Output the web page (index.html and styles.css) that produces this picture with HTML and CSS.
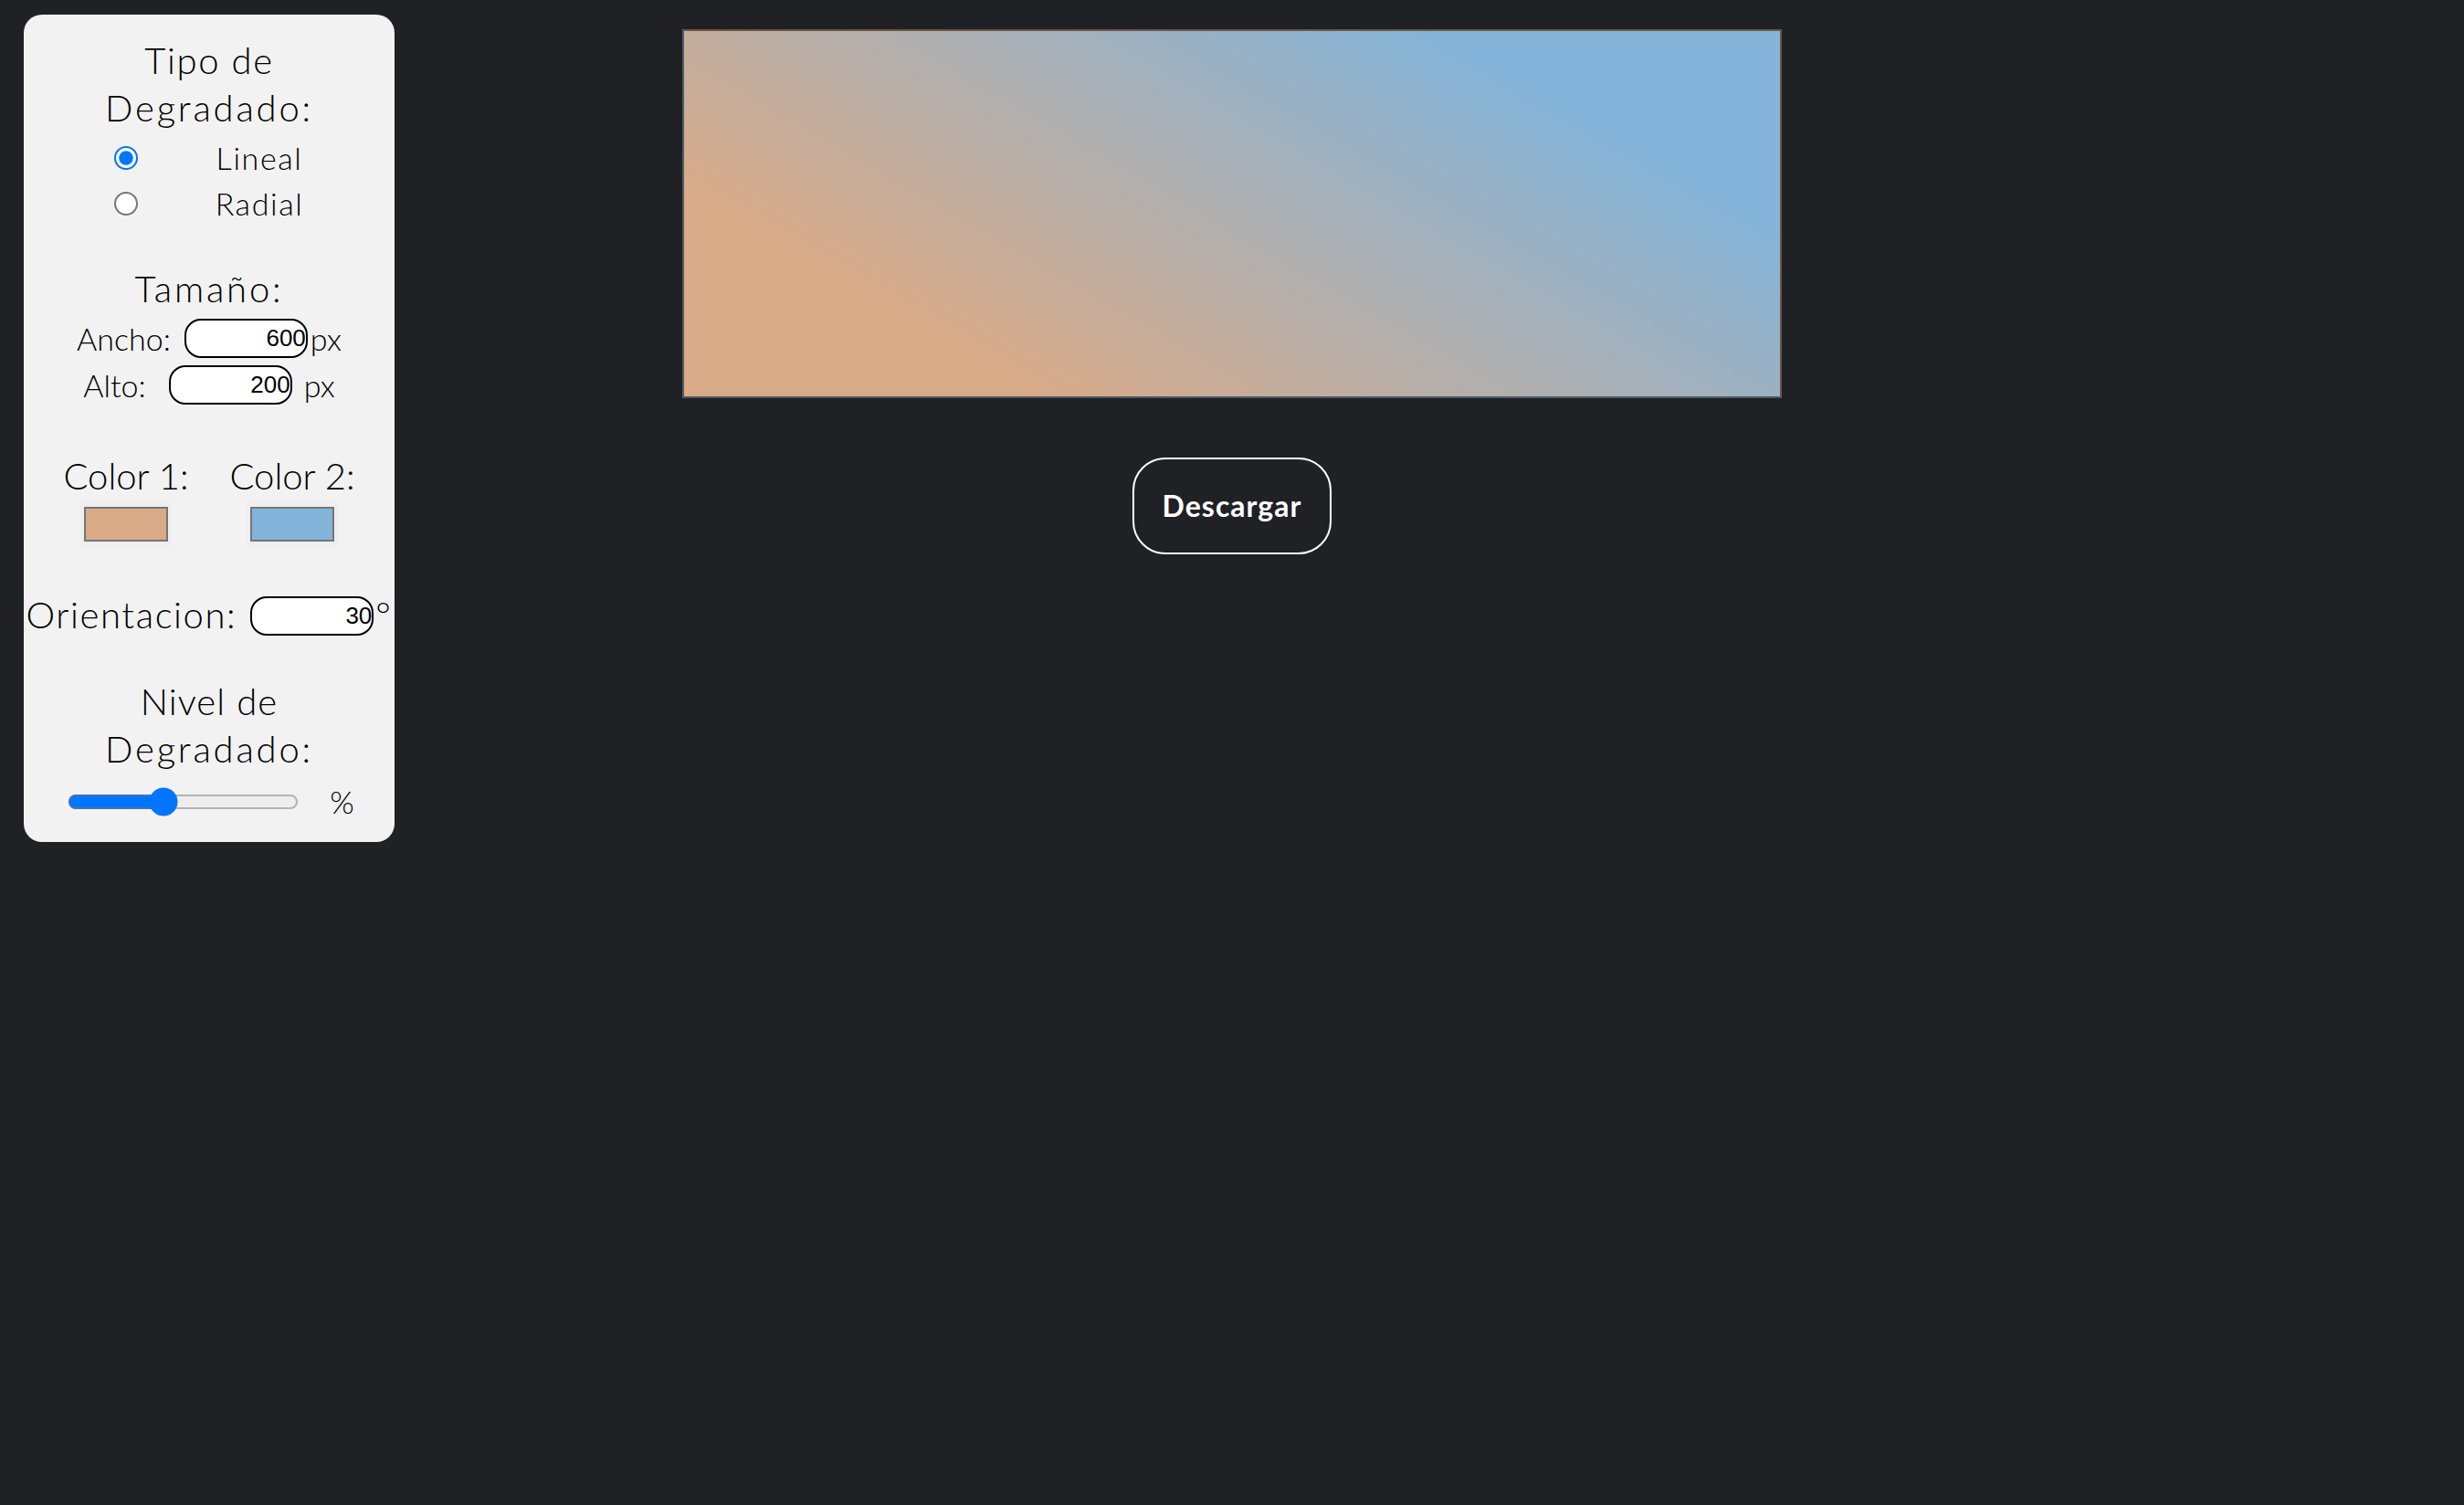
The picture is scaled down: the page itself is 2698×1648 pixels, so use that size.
FILE: index.html
```html
<!DOCTYPE html>
<html lang="es">
<head>
<meta charset="utf-8">
<title>Generador de Degradados</title>
<link rel="stylesheet" href="styles.css">
</head>
<body>
<div class="page">
  <aside class="panel">
    <div class="heading first">Tipo de<br><span class="wide">Degradado:</span></div>
    <div class="types">
      <input type="radio" name="tipo" class="radio" checked>
      <span class="opt">Lineal</span>
      <input type="radio" name="tipo" class="radio">
      <span class="opt">Radial</span>
    </div>

    <div class="heading size-title wide">Tamaño:</div>
    <div class="dim dim-first">Ancho:<input type="text" class="num num-w" value="600">px</div>
    <div class="dim">Alto:<input type="text" class="num num-h" value="200">px</div>

    <div class="colors">
      <div class="color-cell">
        <div class="heading plain">Color 1:</div>
        <input type="color" class="swatch" value="#d9aa87">
      </div>
      <div class="color-cell">
        <div class="heading plain">Color 2:</div>
        <input type="color" class="swatch" value="#84b4d9">
      </div>
    </div>

    <div class="heading orient">Orientacion:<input type="text" class="num num-o" value="30">°</div>

    <div class="heading level-title"><span class="narrow">Nivel de</span><br><span class="wide">Degradado:</span></div>
    <div class="level-row">
      <input type="range" class="level" min="0" max="100" value="40">
      <span class="pct">%</span>
    </div>
  </aside>

  <main class="main">
    <div class="preview"></div>
    <button class="download" type="button">Descargar</button>
  </main>
</div>
</body>
</html>
```

FILE: styles.css
```css
html, body {
  margin: 0;
  padding: 0;
}

body {
  background: #202125;
  font-family: "Lato", "Noto Sans", sans-serif;
  color: #000;
  min-height: 100vh;
}

.page {
  display: grid;
  grid-template-columns: 1fr auto 1fr;
  align-items: start;
}

/* ---------- side panel ---------- */
.panel {
  grid-column: 1;
  justify-self: start;
  margin: 16px 0 0 26px;
  width: 406px;
  box-sizing: border-box;
  background: #f2f2f2;
  border-radius: 20px;
  padding: 24px 0 19px;
  text-align: center;
  font-weight: 300;
}

.heading {
  font-size: 40px;
  line-height: 52px;
  letter-spacing: 1.6px;
}

.heading.plain {
  letter-spacing: 0;
}

.wide {
  letter-spacing: 2.8px;
}

.narrow {
  letter-spacing: 1.1px;
}

.types {
  display: grid;
  grid-template-columns: 110px 182px;
  grid-auto-rows: 50px;
  justify-content: center;
  align-items: center;
  margin-top: 4px;
  font-size: 34px;
  line-height: 50px;
}

.radio {
  zoom: 2;
  margin: 0;
  justify-self: center;
}

.opt {
  justify-self: center;
  letter-spacing: 1.6px;
}

.size-title {
  margin-top: 42px;
}

.dim {
  font-size: 34px;
  line-height: 51px;
}

.dim-first {
  margin-top: 3px;
}

.num {
  box-sizing: border-box;
  width: 135px;
  height: 43px;
  border: 2px solid #000;
  border-radius: 18px;
  background: #fff;
  padding: 0;
  font-family: "Liberation Sans", Arial, sans-serif;
  font-size: 26px;
  letter-spacing: 0;
  color: #000;
  text-align: right;
  vertical-align: 5px;
  outline: none;
}

.num-w { margin: 0 3px 0 15px; }
.num-h { margin: 0 13px 0 25px; }
.num-o { margin: 0 2px 0 15px; }

.colors {
  display: grid;
  grid-template-columns: 150px 150px;
  column-gap: 32px;
  justify-content: center;
  margin-top: 48px;
}

.swatch {
  display: block;
  margin: 0 auto;
  width: 100px;
  height: 54px;
  padding: 0;
  border: none;
  background: #efefef;
  cursor: pointer;
}

.swatch::-webkit-color-swatch-wrapper {
  padding: 8px 4px;
}

.swatch::-webkit-color-swatch {
  border: 2px solid #767676;
  border-radius: 0;
}

.orient {
  margin-top: 46px;
}

.level-title {
  margin-top: 43px;
}

.level-row {
  display: flex;
  justify-content: center;
  align-items: center;
  gap: 30px;
  height: 50px;
  margin-top: 7px;
  font-size: 34px;
  line-height: 50px;
}

.level {
  zoom: 2;
  width: 126.5px;
  margin: 2px;
}

/* ---------- main area ---------- */
.main {
  grid-column: 2;
  display: flex;
  flex-direction: column;
  align-items: center;
  padding-top: 32px;
}

.preview {
  width: 1200px;
  height: 400px;
  border: 2px solid;
  border-color: #6b5646 #6b5646 #4a5a68 #4a5a68;
  background: linear-gradient(30deg, #d9aa87 20%, #84b4d9 80%);
}

.download {
  margin-top: 65px;
  padding: 32px 31px;
  background: transparent;
  border: 2px solid #fff;
  border-radius: 36px;
  color: #fff;
  font-family: "Lato", "Noto Sans", sans-serif;
  font-weight: 700;
  font-size: 32px;
  line-height: 38px;
  letter-spacing: 1px;
  cursor: pointer;
}
```
